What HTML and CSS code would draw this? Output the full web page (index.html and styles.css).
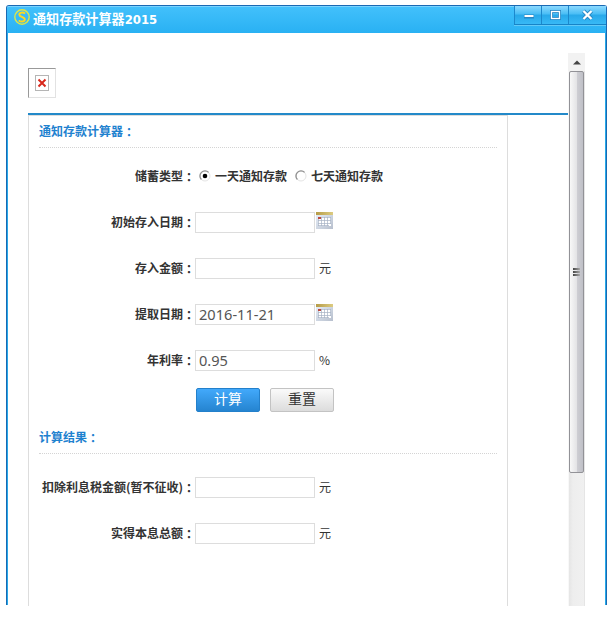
FILE: index.html
```html
<!DOCTYPE html>
<html lang="zh-CN">
<head>
<meta charset="utf-8">
<title>通知存款计算器2015</title>
<link rel="stylesheet" href="styles.css">
</head>
<body>
<svg width="0" height="0" class="defs">
  <defs>
    <linearGradient id="paper" x1="0" y1="0" x2="1" y2="1"><stop offset="0" stop-color="#e8f0fa"/><stop offset="1" stop-color="#b7bfcd"/></linearGradient>
    <linearGradient id="gold" x1="0" y1="0" x2="1" y2="0"><stop offset="0" stop-color="#b69c48"/><stop offset="1" stop-color="#dccb81"/></linearGradient>
    <symbol id="calendar" viewBox="0 0 17 17">
      <rect width="17" height="17" fill="url(#paper)"/>
      <rect width="17" height="3" fill="url(#gold)"/>
      <rect x="2" y="5" width="13" height="9" fill="#fff"/>
      <path d="M2 5.500h13M2 8.500h13M2 11.500h13M2 13.500h11M2.500 5v9M5.500 5v9M8.500 5v9M11.500 5v9M14.500 5v7" stroke="#a6b2c4" stroke-width=".7" fill="none"/>
      <rect x="2" y="5" width="3" height="2" fill="#bd493f"/>
    </symbol>
  </defs>
</svg>
<div class="window">
  <header class="titlebar">
    <svg class="logo" viewBox="0 0 16 16" fill="none">
      <circle cx="8" cy="8" r="7.200" stroke="#dce649" stroke-width="1.400"/>
      <path d="M11 4.600C9.500 3 5.300 3.100 5.300 5.700C5.300 8 10.800 7.700 10.800 10.400C10.800 13 6.300 13 4.800 11.300" stroke="#ffd91e" stroke-width="1.900"/>
    </svg>
    <h1 class="title">通知存款计算器<span class="year">2015</span></h1>
    <div class="controls">
      <span class="control"><svg width="27" height="19"><path d="M9 10.500h10" stroke="#2787c4" stroke-width="4"/><path d="M9.500 10h9" stroke="#fff" stroke-width="2"/></svg></span>
      <span class="control"><svg width="27" height="19" fill="none"><rect x="9.500" y="5.500" width="8" height="7" stroke="#2787c4" stroke-width="3"/><rect x="9.500" y="5.500" width="8" height="7" stroke="#fff" stroke-width="1.300"/></svg></span>
      <span class="control close"><svg width="37" height="19"><path d="M14.500 5l8 8M22.500 5l-8 8" stroke="#2787c4" stroke-width="4"/><path d="M14.500 5l8 8M22.500 5l-8 8" stroke="#fff" stroke-width="2.300"/></svg></span>
    </div>
  </header>
  <div class="body">
    <main class="content">
      <div class="missing"><svg width="14" height="16" fill="none"><rect x=".5" y=".5" width="13" height="15" stroke="#b5b5b5"/><path d="M3.500 4.500l7 7M10.500 4.500l-7 7" stroke="#d8281c" stroke-width="2"/></svg></div>
      <div class="rule"></div>
      <section class="panel">
        <h2 class="heading">通知存款计算器<span class="colon" lang="zh-TW">：</span></h2>
        <div class="rows">
          <div class="row"><span class="label">储蓄类型<span class="colon" lang="zh-TW">：</span></span>
            <span class="choice"><svg width="12" height="12" fill="none"><circle cx="6" cy="6" r="5" stroke="#e4e4e4"/><path d="M2.400 9.500A5 5 0 0 1 9.600 2.400" stroke="#909090" stroke-width="1.300"/><circle cx="6" cy="6" r="2.300" fill="#000"/></svg>一天通知存款</span>
            <span class="choice"><svg width="12" height="12" fill="none"><circle cx="6" cy="6" r="5" stroke="#e4e4e4"/><path d="M2.400 9.500A5 5 0 0 1 9.600 2.400" stroke="#909090" stroke-width="1.300"/></svg>七天通知存款</span>
          </div>
          <div class="row"><span class="label">初始存入日期<span class="colon" lang="zh-TW">：</span></span><span class="field"></span><svg class="calendar"><use href="#calendar"/></svg></div>
          <div class="row"><span class="label">存入金额<span class="colon" lang="zh-TW">：</span></span><span class="field"></span><span class="unit">元</span></div>
          <div class="row"><span class="label">提取日期<span class="colon" lang="zh-TW">：</span></span><span class="field">2016-11-21</span><svg class="calendar"><use href="#calendar"/></svg></div>
          <div class="row"><span class="label">年利率<span class="colon" lang="zh-TW">：</span></span><span class="field">0.95</span><span class="unit">%</span></div>
        </div>
        <div class="actions"><button class="btn primary">计算</button><button class="btn">重置</button></div>
        <h2 class="heading">计算结果<span class="colon" lang="zh-TW">：</span></h2>
        <div class="rows results">
          <div class="row"><span class="label">扣除利息税金额(暂不征收)<span class="colon" lang="zh-TW">：</span></span><span class="field"></span><span class="unit">元</span></div>
          <div class="row"><span class="label">实得本息总额<span class="colon" lang="zh-TW">：</span></span><span class="field"></span><span class="unit">元</span></div>
        </div>
      </section>
    </main>
    <aside class="scrollbar">
      <div class="up"><svg width="8" height="5"><path d="M0 4.500L4 .5l4 4z" fill="#444"/></svg></div>
      <div class="thumb"><i class="grip"></i><i class="grip"></i><i class="grip"></i></div>
    </aside>
  </div>
</div>
</body>
</html>
```
FILE: styles.css
```css
* { box-sizing: border-box; }
body {
  margin: 0;
  height: 623px;
  padding: 5px 9px 18px 6px;
  overflow: hidden;
  background: #fff;
  color: #333;
  font: 12px/20px "Noto Sans CJK SC", sans-serif;
}
.defs { position: absolute; }
.colon { display: inline-block; height: 20px; font-family: "Noto Sans CJK TC", sans-serif; transform: translateY(1px); }
.window {
  width: 601px;
  height: 600px;
  border: 1px solid #1a69b3;
  border-bottom: 0;
  border-radius: 3px 3px 0 0;
  box-shadow: inset 1px 0 #25a9e8, inset -1px 0 #25a9e8;
}
.titlebar {
  display: flex;
  height: 27px;
  padding-left: 7px;
  background: linear-gradient(#42c0fb, #29b1f3);
  border-top: 1px solid #79d3ff;
  border-radius: 2px 2px 0 0;
}
.logo { width: 16px; height: 16px; margin-top: 2px; }
.title {
  margin: 2px 0 0 3px;
  color: #fff;
  font-size: 13.1px;
  line-height: 20px;
  font-weight: 700;
}
.year { font: bold 11.7px "DejaVu Sans", sans-serif; }
.controls {
  display: flex;
  height: 19px;
  margin: -1px 0 0 auto;
  background: linear-gradient(#8bd9ff, #48bdf5 45%, #27a8e9 50%, #38b9f6);
  border-bottom: 1px solid #1784c7;
  box-shadow: 0 1px #62caf8;
}
.control { display: flex; width: 27px; border-left: 1px solid #1c88cc; overflow: hidden; }
.close { width: 38px; }
.body { display: flex; height: 572px; padding: 20px 21px 0; }
.content { width: 540px; padding-top: 15px; }
.missing {
  display: flex;
  width: 28px;
  height: 30px;
  padding: 6px;
  border: 1px solid;
  border-color: #999 #e2e2e2 #e2e2e2 #999;
}
.rule { height: 2px; margin-top: 15px; background: #2389c9; }
.panel {
  width: 480px;
  height: 491px;
  padding: 0 10px;
  border: 1px solid #ddd;
  border-bottom: 0;
}
.heading {
  height: 32px;
  margin: 0;
  padding-top: 5px;
  border-bottom: 1px dotted #d4d4d4;
  color: #1f82cf;
  font-size: 12px;
  line-height: 20px;
  font-weight: 700;
}
.rows { display: flex; flex-direction: column; gap: 25px; padding-top: 18px; }
.row { display: flex; align-items: center; height: 21px; }
.label { width: 156px; padding-bottom: 1px; text-align: right; font-weight: 700; white-space: nowrap; }
.choice { display: flex; align-items: center; margin-left: 4px; padding-bottom: 1px; font-weight: 700; }
.choice svg { margin-right: 4px; }
.choice + .choice { margin-left: 8px; }
.field {
  width: 120px;
  height: 21px;
  padding-left: 3px;
  border: 1px solid #ddd;
  color: #555;
  font: 14.6px/18px "Noto Sans", sans-serif;
}
.calendar { width: 17px; height: 17px; margin: -4px 0 0 1px; }
.unit { margin-left: 4px; padding-bottom: 2px; }
.actions { display: flex; gap: 10px; height: 34px; margin: 17px 0 0 157px; }
.btn {
  width: 64px;
  height: 24px;
  padding: 0 0 3px;
  border: 1px solid #c3c3c3;
  border-radius: 2px;
  background: linear-gradient(#fafafa, #dcdcdc);
  color: #333;
  font: 14px/19px "Noto Sans CJK SC", sans-serif;
}
.primary { border-color: #2380cb; background: linear-gradient(#42a9fb, #2584d0); color: #fff; }
.results { padding-top: 23px; }
.scrollbar {
  width: 17px;
  height: 553px;
  background: linear-gradient(90deg, #f8f8f8 1px, #e5e5e5 1px, #eee 5px, #f0f0f0 16px, #e5e5e5 16px);
}
.up { display: flex; align-items: center; justify-content: center; height: 18px; padding-left: 1px; background: #f2f2f2; }
.thumb {
  display: flex;
  flex-direction: column;
  align-items: center;
  justify-content: center;
  gap: 1px;
  width: 15px;
  height: 402px;
  margin-left: 1px;
  border: 1px solid #929297;
  border-radius: 2px;
  background: linear-gradient(90deg, #f8f8f8, #e4e4e6 50%, #cfcfd4 51%, #bfc0c7);
}
.grip { width: 7px; height: 2px; background: linear-gradient(90deg, #444, #aaa); }
```
